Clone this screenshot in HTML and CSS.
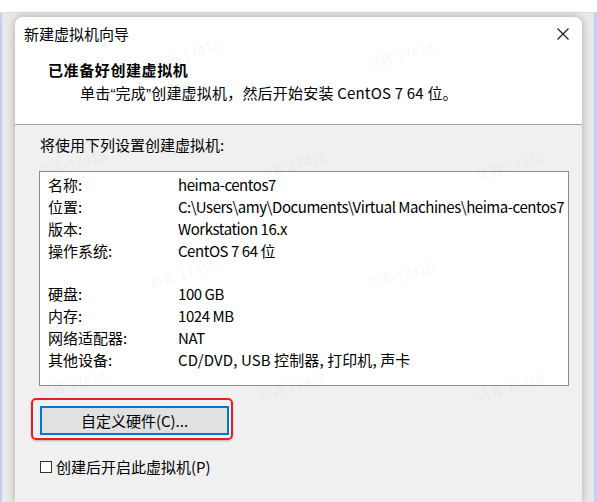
FILE: index.html
```html
<!DOCTYPE html>
<html lang="zh-CN">
<head>
<meta charset="utf-8">
<title>新建虚拟机向导</title>
<link rel="stylesheet" href="styles.css">
</head>
<body>
<div class="top"></div>
<div class="desk">
  <div class="strip strip-left"></div>
  <div class="area">
    <div class="dialog">
      <div class="header">
        <div class="titlebar">
          <span class="title">新建虚拟机向导</span>
          <svg class="close" width="12" height="12" viewBox="0 0 12 12"><path d="M0.5 0.5 L11.5 11.5 M11.5 0.5 L0.5 11.5" stroke="#1a1a1a" stroke-width="1.1" fill="none"/></svg>
        </div>
        <div class="heading">已准备好创建虚拟机</div>
        <div class="desc">单击<span class="q">“</span>完成<span class="q">”</span>创建虚拟机，然后开始安装 CentOS 7 64 位。</div>
      </div>
      <div class="body">
        <div class="intro">将使用下列设置创建虚拟机:</div>
        <div class="list">
          <div class="row"><span class="k">名称:</span><span class="v">heima-centos7</span></div>
          <div class="row"><span class="k">位置:</span><span class="v">C:\Users\amy\Documents\Virtual Machines\heima-centos7</span></div>
          <div class="row"><span class="k">版本:</span><span class="v">Workstation 16.x</span></div>
          <div class="row"><span class="k">操作系统:</span><span class="v">CentOS 7 64 位</span></div>
          <div class="row"><span class="k"></span><span class="v"></span></div>
          <div class="row"><span class="k">硬盘:</span><span class="v">100 GB</span></div>
          <div class="row"><span class="k">内存:</span><span class="v">1024 MB</span></div>
          <div class="row"><span class="k">网络适配器:</span><span class="v">NAT</span></div>
          <div class="row"><span class="k">其他设备:</span><span class="v v-cjk">CD/DVD, USB 控制器, 打印机, 声卡</span></div>
        </div>
        <div class="btnrow"><button class="btn">自定义硬件(C)...</button></div>
        <label class="check"><span class="box"></span>创建后开启此虚拟机(P)</label>
      </div>
    </div>
  </div>
  <div class="strip strip-right"></div>
</div>
<div class="marks">
  <span class="wm a1">访客 17418</span>
  <span class="wm a2">访客 17418</span>
  <span class="wm b1">访客 17418</span>
  <span class="wm b2">访客 17418</span>
  <span class="wm b3">访客 17418</span>
  <span class="wm c1">访客 17418</span>
  <span class="wm c2">访客 17418</span>
  <span class="wm d1">访客 17418</span>
  <span class="wm d2">访客 17418</span>
  <span class="wm d3">访客 17418</span>
</div>
</body>
</html>
```

FILE: styles.css
```css
* { box-sizing: border-box; }
html, body {
  margin: 0;
  height: 100%;
  overflow: hidden;
}
body {
  background: #ffffff;
  font-family: "Noto Sans CJK SC", sans-serif;
  font-size: 15px;
  color: #000;
  position: relative;
}
.top { height: 12px; background: #fff; }
.desk {
  height: calc(100vh - 12px);
  display: flex;
  background: #e9e9e9;
  border-top: 1px solid #dcdcdc;
}
.strip { flex: none; background: #c3cdf6; }
.strip-left { width: 2px; }
.strip-right { width: 3px; }
.area {
  flex: 1;
  min-width: 0;
  padding: 4px 12px 0 13px;
  display: flex;
}
.dialog {
  flex: 1;
  min-width: 0;
  background: #f0f0f0;
  border-radius: 8px 8px 0 0;
  box-shadow: 0 0 8px rgba(0,0,0,0.28);
  display: flex;
  flex-direction: column;
  overflow: hidden;
}
.header {
  background: #fff;
  height: 108px;
  border-bottom: 1px solid #a0a0a0;
  flex: none;
}
.titlebar {
  display: flex;
  align-items: center;
  justify-content: space-between;
  padding: 7px 13px 0 9px;
  line-height: 20px;
  height: 27px;
}
.close { display: block; margin-top: -1px; }
.heading {
  margin-top: 16px;
  padding-left: 33px;
  font-weight: bold;
  line-height: 20px;
  letter-spacing: 0.6px;
}
.desc {
  margin-top: 3px;
  padding-left: 65px;
  line-height: 20px;
  letter-spacing: 0.2px;
}
.q { font-family: "Liberation Sans", sans-serif; }
.body {
  flex: 1;
  padding: 10px 13px 0 24px;
}
.intro {
  padding-left: 1px;
  line-height: 20px;
}
.list {
  margin-top: 16px;
  height: 215px;
  background: #fff;
  border: 1px solid #8c8c8c;
  padding: 2px 0 0 8px;
  overflow: hidden;
}
.row {
  display: grid;
  grid-template-columns: 130px 1fr;
  height: 21.875px;
  line-height: 22px;
  white-space: nowrap;
}
.v { letter-spacing: -0.45px; }
.v-cjk { letter-spacing: 0.1px; }
.btnrow {
  margin-top: 20px;
  padding-left: 1px;
}
.btn {
  position: relative;
  width: 189px;
  height: 29px;
  background: #e1e1e1;
  border: 2px solid #0078d7;
  font-family: inherit;
  font-size: 15px;
  color: #000;
  padding: 0;
  line-height: 24px;
  display: block;
}
.btn::after {
  content: "";
  position: absolute;
  left: -11px;
  top: -10px;
  right: -6px;
  bottom: -7px;
  border: 2.5px solid #ee1c1c;
  border-radius: 5px;
  box-shadow: 0 1px 2px rgba(0,0,0,0.25);
}
.check {
  margin-top: 21px;
  display: flex;
  align-items: center;
  line-height: 22px;
  padding-left: 1px;
}
.box {
  width: 12px;
  height: 12px;
  border: 1px solid #333;
  background: #fff;
  margin-right: 4px;
}
.marks {
  position: absolute;
  inset: 0;
  pointer-events: none;
  overflow: hidden;
}
.wm {
  position: absolute;
  transform: translate(-50%, -50%) rotate(-15deg);
  font-family: "Noto Sans CJK SC", sans-serif;
  font-size: 14px;
  color: rgba(0,0,0,0.05);
  white-space: nowrap;
}
.a1 { left: 186px; top: 53px; }
.a2 { left: 400px; top: 55px; }
.b1 { left: 72px; top: 163px; }
.b2 { left: 292px; top: 165px; }
.b3 { left: 510px; top: 166px; }
.c1 { left: 183px; top: 273px; }
.c2 { left: 400px; top: 275px; }
.d1 { left: 72px; top: 383px; }
.d2 { left: 292px; top: 385px; }
.d3 { left: 510px; top: 386px; }
```
